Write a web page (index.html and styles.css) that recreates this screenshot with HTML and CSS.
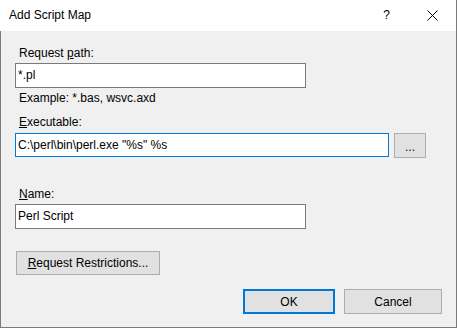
FILE: index.html
```html
<!DOCTYPE html>
<html lang="en">
<head>
    <meta charset="UTF-8">
    <title>Add Script Map</title>
    <link rel="stylesheet" href="styles.css">
</head>
<body>
    <div class="window">
        <div class="titlebar">
            <span class="title">Add Script Map</span>
            <span class="help">?</span>
            <svg class="close" width="11" height="11" viewBox="0 0 11 11">
                <path d="M0.5 0.5 L10.5 10.5 M10.5 0.5 L0.5 10.5" stroke="#000" stroke-width="1" fill="none"/>
            </svg>
        </div>

        <div class="content">
            <div class="label label-path">Request <u>p</u>ath:</div>
            <div class="field field-short">*.pl</div>
            <div class="hint">Example: *.bas, wsvc.axd</div>

            <div class="label label-exec"><u>E</u>xecutable:</div>
            <div class="exec-row">
                <div class="field field-long focused">C:\perl\bin\perl.exe "%s" %s</div>
                <button class="btn btn-browse">...</button>
            </div>

            <div class="label label-name"><u>N</u>ame:</div>
            <div class="field field-short">Perl Script</div>

            <button class="btn btn-restrict"><u>R</u>equest Restrictions...</button>

            <div class="actions">
                <button class="btn btn-action default">OK</button>
                <button class="btn btn-action">Cancel</button>
            </div>
        </div>
    </div>
</body>
</html>
```

FILE: styles.css
```css
body {
    margin: 0;
    font-family: "Liberation Sans", Arial, sans-serif;
    font-size: 12px;
    color: #000;
}
.window {
    width: 457px;
    height: 328px;
    box-sizing: border-box;
    border-right: 1px solid #7a7a7a;
    border-bottom: 1px solid #7a7a7a;
    display: flex;
    flex-direction: column;
    background-color: #f0f0f0;
}
.titlebar {
    height: 31px;
    background-color: #fff;
    display: flex;
    align-items: center;
    flex-shrink: 0;
}
.title {
    padding-left: 9px;
    flex: 1;
    margin-top: -1px;
}
.help {
    font-size: 12px;
    margin-right: 37px;
    margin-top: -1px;
}
.close {
    margin-right: 18px;
    margin-top: -1px;
}
.content {
    flex: 1;
    border-left: 1px solid #7a7a7a;
    padding-left: 14px;
    display: flex;
    flex-direction: column;
    align-items: flex-start;
}
.label {
    line-height: 16px;
    padding-left: 4px;
}
.label-path {
    margin-top: 14px;
    margin-bottom: 2px;
}
.label-exec {
    margin-top: 8px;
    margin-bottom: 3px;
}
.label-name {
    margin-top: 28px;
    margin-bottom: 2px;
}
.field {
    box-sizing: border-box;
    height: 25px;
    line-height: 23px;
    padding-left: 2px;
    background-color: #fff;
    border: 1px solid #7a7a7a;
    white-space: nowrap;
}
.field-short {
    width: 291px;
}
.field-long {
    width: 374px;
    height: 24px;
    line-height: 22px;
}
.field.focused {
    border-color: #0078d7;
}
.hint {
    line-height: 16px;
    margin-top: 2px;
    padding-left: 4px;
}
.exec-row {
    display: flex;
    gap: 5px;
}
.btn {
    font-family: inherit;
    font-size: 12px;
    color: #000;
    background-color: #e1e1e1;
    border: 1px solid #adadad;
    box-sizing: border-box;
    height: 24px;
    padding: 0;
    margin: 0;
}
.btn-browse {
    width: 32px;
    height: 25px;
    padding-top: 3px;
}
.btn-restrict {
    margin-top: 22px;
    margin-left: 1px;
    width: 144px;
}
.actions {
    display: flex;
    gap: 9px;
    margin-top: 14px;
    margin-left: 228px;
}
.btn-action {
    width: 98px;
    height: 25px;
}
.btn-action.default {
    width: 92px;
    border: 2px solid #0078d7;
}
```
